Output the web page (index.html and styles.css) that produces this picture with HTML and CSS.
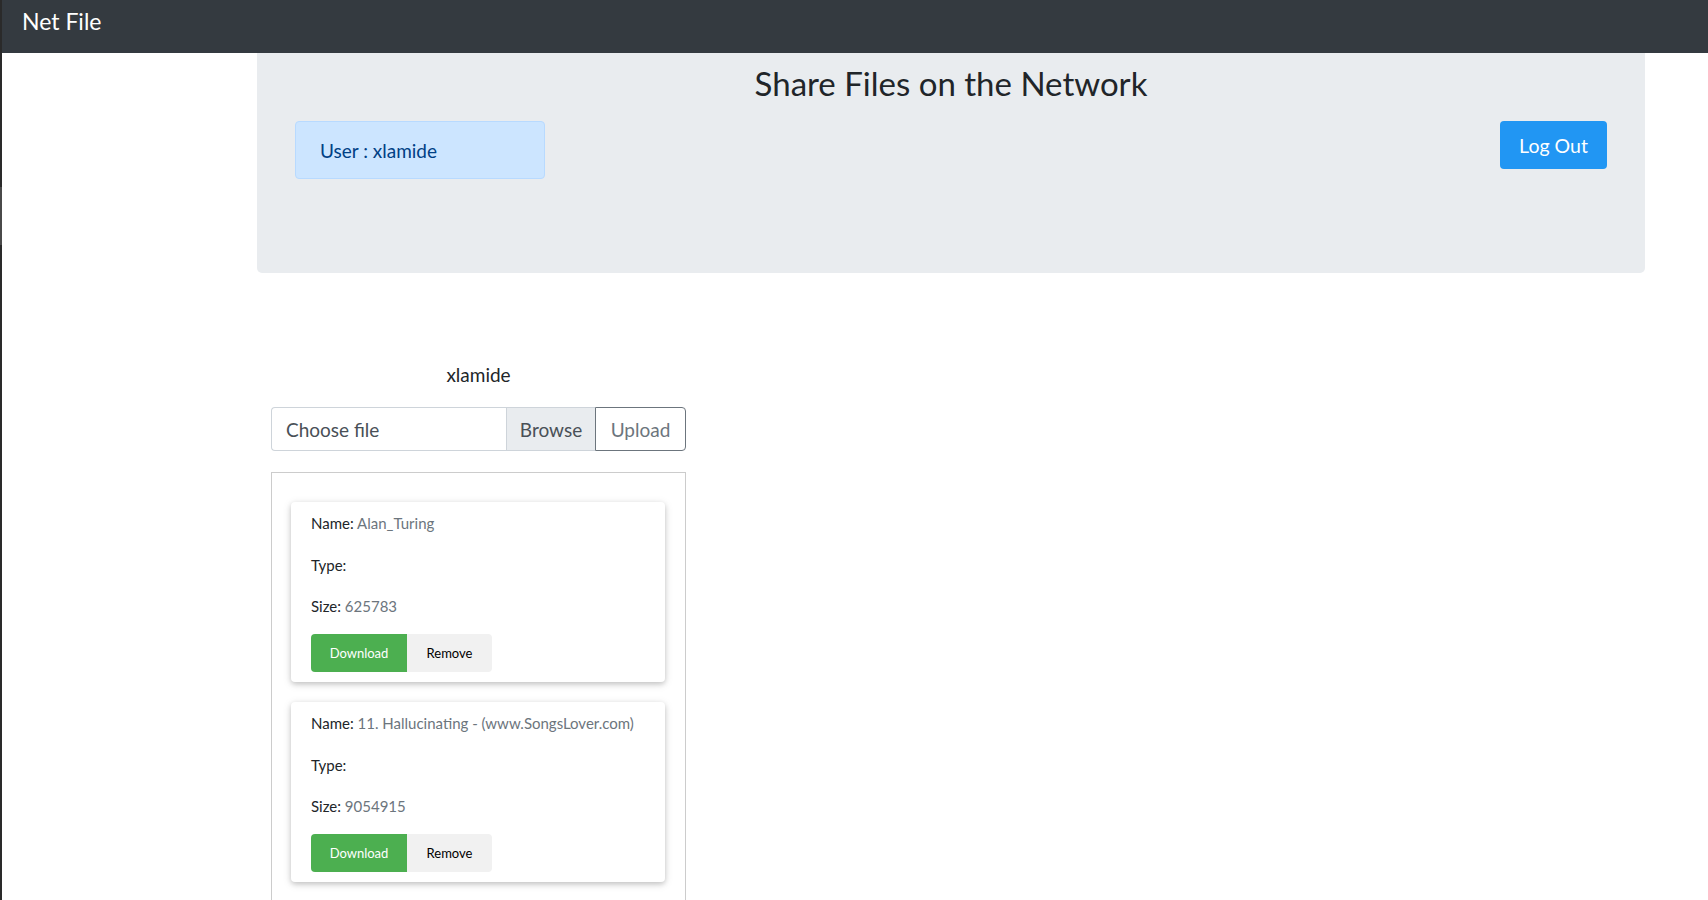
FILE: index.html
```html
<!DOCTYPE html>
<html lang="en">
<head>
<meta charset="utf-8">
<title>Net File</title>
<link rel="stylesheet" href="styles.css">
</head>
<body>
<nav class="navbar"><span class="brand">Net File</span></nav>
<main class="page">
  <section class="jumbo">
    <h1 class="title">Share Files on the Network</h1>
    <div class="jumbo-row">
      <div class="alert">User : xlamide</div>
      <button class="btn-logout">Log Out</button>
    </div>
  </section>
  <section class="files-col">
    <p class="owner">xlamide</p>
    <div class="input-group">
      <div class="file-label">Choose file</div>
      <div class="browse">Browse</div>
      <button class="upload">Upload</button>
    </div>
    <div class="file-list">
      <div class="card">
        <p class="line"><span class="lbl">Name:</span> <span class="val">Alan_Turing</span></p>
        <p class="line"><span class="lbl">Type:</span> <span class="val"></span></p>
        <p class="line last"><span class="lbl">Size:</span> <span class="val">625783</span></p>
        <div class="btn-bar">
          <button class="btn-dl">Download</button><button class="btn-rm">Remove</button>
        </div>
      </div>
      <div class="card">
        <p class="line"><span class="lbl">Name:</span> <span class="val">11. Hallucinating - (www.SongsLover.com)</span></p>
        <p class="line"><span class="lbl">Type:</span> <span class="val"></span></p>
        <p class="line last"><span class="lbl">Size:</span> <span class="val">9054915</span></p>
        <div class="btn-bar">
          <button class="btn-dl">Download</button><button class="btn-rm">Remove</button>
        </div>
      </div>
    </div>
  </section>
</main>
</body>
</html>
```

FILE: styles.css
```css
* { box-sizing: border-box; }

html, body { margin: 0; padding: 0; }

body {
  font-family: Lato, "Open Sans", sans-serif;
  color: #212529;
  background: #fff;
  border-left: 2px solid #2a2a2a;
  min-height: 900px;
  overflow: hidden;
}

body::before {
  content: "";
  position: fixed;
  left: 0;
  top: 187px;
  width: 2px;
  height: 58px;
  background: #4a4a4a;
}

.navbar {
  height: 53px;
  background: #343a40;
  padding: 8px 0 0 20px;
  display: flex;
  align-items: flex-start;
}

.brand {
  color: #fff;
  font-size: 23px;
  line-height: 1.2;
}

.page {
  padding-left: 255px;
  width: 1643px;
}

.jumbo {
  height: 220px;
  background: #e9ecef;
  border-radius: 0 0 5px 5px;
  padding: 9px 38px 0 38px;
}

.title {
  margin: 0;
  font-size: 33px;
  font-weight: 400;
  line-height: 42px;
  text-align: center;
  color: #212529;
}

.jumbo-row {
  margin-top: 17px;
  display: flex;
  justify-content: space-between;
  align-items: flex-start;
}

.alert {
  width: 250px;
  height: 58px;
  background: #cce5ff;
  border: 1px solid #b8daff;
  border-radius: 4px;
  color: #004085;
  font-size: 19px;
  padding-left: 24px;
  display: flex;
  align-items: center;
}

.btn-logout {
  width: 107px;
  height: 48px;
  background: #2196f3;
  border: none;
  border-radius: 4px;
  color: #fff;
  font-family: inherit;
  font-size: 19.5px;
  padding: 0;
}

.files-col {
  margin-left: 14px;
  width: 415px;
}

.owner {
  margin: 88px 0 0;
  font-size: 19px;
  line-height: 28px;
  text-align: center;
}

.input-group {
  margin-top: 18px;
  height: 44px;
  display: flex;
  font-size: 19px;
}

.file-label {
  flex: 1;
  border: 1px solid #ced4da;
  border-right: none;
  border-radius: 4px 0 0 4px;
  color: #495057;
  padding-left: 14px;
  display: flex;
  align-items: center;
}

.browse {
  width: 89px;
  background: #e9ecef;
  border: 1px solid #ced4da;
  border-right: none;
  color: #495057;
  display: flex;
  align-items: center;
  justify-content: center;
}

.upload {
  width: 91px;
  background: #fff;
  border: 1px solid #6c757d;
  border-radius: 0 4px 4px 0;
  color: #6c757d;
  font-family: inherit;
  font-size: 19px;
  padding: 0;
}

.file-list {
  margin-top: 21px;
  border: 1px solid #ccc;
  border-bottom: none;
  padding: 29px 20px 20px 19px;
  display: flex;
  flex-direction: column;
  gap: 20px;
}

.card {
  height: 180px;
  background: #fff;
  border-radius: 4px;
  box-shadow: 0 2px 5px 0 rgba(0,0,0,0.16), 0 2px 10px 0 rgba(0,0,0,0.12);
  padding: 10px 20px 10px;
  font-size: 15px;
}

.line {
  margin: 0 0 19.5px;
  line-height: 22px;
}

.line.last { margin-bottom: 17px; }

.lbl { color: #212529; }
.val { color: #6c757d; }

.btn-bar {
  display: flex;
}

.btn-dl, .btn-rm {
  height: 38px;
  border: none;
  font-family: inherit;
  font-size: 13px;
  padding: 0;
}

.btn-dl {
  width: 96px;
  background: #4caf50;
  color: #fff;
  border-radius: 4px 0 0 4px;
}

.btn-rm {
  width: 85px;
  background: #f1f1f1;
  color: #000;
  border-radius: 0 4px 4px 0;
}
```
